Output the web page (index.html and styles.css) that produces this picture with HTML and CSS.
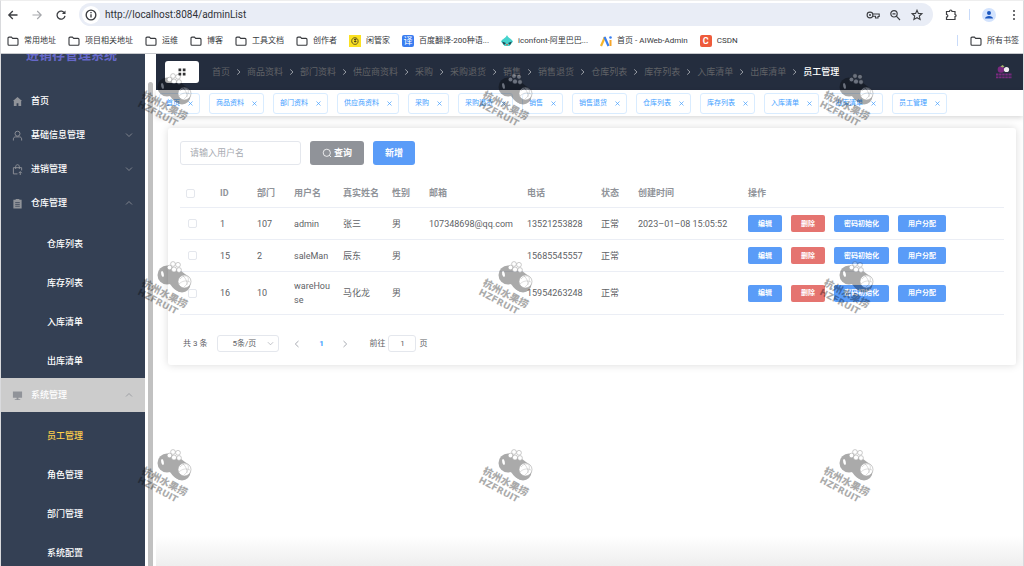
FILE: index.html
```
<!DOCTYPE html>
<html lang="zh-CN">
<head>
    <meta charset="UTF-8">
    <meta name="viewport" content="width=device-width, initial-scale=1.0">
    <title>员工管理</title>
    <link rel="stylesheet" href="styles.css">
</head>
<body>
    <svg class="defs" aria-hidden="true">
        <symbol id="folder" viewBox="0 0 12 12"><path d="M1 3.2c0-.7.4-1.1 1-1.1h2.4l1.3 1.3H10c.6 0 1 .4 1 1v4.9c0 .6-.4 1-1 1H2c-.6 0-1-.4-1-1z" fill="none" stroke="currentColor" stroke-width="1.1"/></symbol>
        <symbol id="right" viewBox="0 0 8 8"><path d="M2.5 1 5.7 4 2.5 7" fill="none" stroke="currentColor"/></symbol>
        <symbol id="left" viewBox="0 0 8 8"><path d="M5.5 1 2.3 4l3.2 3" fill="none" stroke="currentColor"/></symbol>
        <symbol id="down" viewBox="0 0 8 8"><path d="M1 2.5 4 5.5l3-3" fill="none" stroke="currentColor" stroke-width=".8"/></symbol>
        <symbol id="up" viewBox="0 0 8 8"><path d="M1 5.5 4 2.5l3 3" fill="none" stroke="currentColor" stroke-width=".8"/></symbol>
        <symbol id="close" viewBox="0 0 8 8"><path d="m1.7 1.7 4.6 4.6m0-4.6L1.7 6.3" fill="none" stroke="currentColor" stroke-width=".8"/></symbol>
        <symbol id="fruit" viewBox="-6 0 60 62">
            <circle cx="27" cy="15" r="9.500"/>
            <path d="M33 8c6 1 12 5 16 10l-8 14c-7-1-9-6-12-9z"/>
            <circle cx="42" cy="24" r="8.500"/>
            <g fill="#fff" stroke="#000" stroke-width=".6">
                <circle cx="33" cy="4" r="2.400"/><circle cx="38" cy="4.800" r="2.400"/><circle cx="29.500" cy="7.500" r="2.300"/><circle cx="34" cy="9.500" r="2.500"/><circle cx="39" cy="10" r="2.400"/>
                <circle cx="44.500" cy="21.500" r="6.500"/>
            </g>
            <path d="M40 19c2-3 6-4 8-2 1 3 0 7-4 10m-5-3c3-3 7-4 11-2m-7-6c3 2 4 6 4 9" fill="none" stroke="#000" stroke-width=".400"/>
            <ellipse cx="22.500" cy="14" rx="1.300" ry="3" fill="#fff" transform="rotate(-12 22.500 14)"/>
            <text x="1" y="25" transform="rotate(28 1 25)" class="mark-name">杭州水果捞</text>
            <text x="-3" y="34" transform="rotate(28 -3 34)" class="mark-latin">HZFRUIT</text>
        </symbol>
    </svg>

    <div class="window">
        <!-- browser toolbar -->
        <div class="toolbar">
            <button class="icon-btn" aria-label="后退"><svg viewBox="0 0 12 12"><path d="M10.500 6H2m3.800-4L1.800 6l4 4" fill="none" stroke="currentColor" stroke-width="1.3"/></svg></button>
            <button class="icon-btn muted" aria-label="前进"><svg viewBox="0 0 12 12"><path d="M1.500 6H10M6.200 2l4 4-4 4" fill="none" stroke="currentColor" stroke-width="1.1"/></svg></button>
            <button class="icon-btn" aria-label="刷新"><svg viewBox="0 0 12 12"><path d="M9.700 4.500A4 4 0 1 0 10 6.800" fill="none" stroke="currentColor" stroke-width="1.3"/><path d="M10.500 1.500v3.600H6.900z" fill="currentColor"/></svg></button>
            <div class="omnibox">
                <svg class="info" viewBox="0 0 16 16"><circle cx="8" cy="8" r="8" fill="#fff"/><circle cx="8" cy="8" r="4.300" fill="none" stroke="currentColor" stroke-width="1.200"/><path d="M8 7.300v3M8 5.300v1.200" stroke="currentColor" stroke-width="1.200"/></svg>
                <input class="url" type="text" aria-label="地址" value="http://localhost:8084/adminList">
                <svg class="omni-icon" viewBox="0 0 14 12"><g fill="none" stroke="currentColor" stroke-width="1.100"><circle cx="4" cy="6" r="2.900"/><path d="M6.700 5h6.500v2.500H12V9H9.500V7.300H6.700"/></g><circle cx="4" cy="6" r="1" fill="currentColor"/></svg>
                <svg class="omni-icon" viewBox="0 0 14 12"><g fill="none" stroke="currentColor" stroke-width="1.200"><circle cx="6" cy="4.800" r="3.200"/><path d="M8.300 7.200 12 11M4.500 4.800h3"/></g></svg>
                <svg class="omni-icon" viewBox="0 0 14 12"><path d="m7 1.200 1.400 3.200 3.500.3-2.600 2.300.8 3.500L7 8.700l-3.100 1.800.8-3.500L2.100 4.700l3.500-.3z" fill="none" stroke="currentColor" stroke-width="1.100"/></svg>
            </div>
            <button class="icon-btn" aria-label="扩展程序"><svg viewBox="0 0 12 12"><path d="M1.500 2.500h3c0-2 2.500-2 2.500 0h3v3c1.500 0 1.500 2 0 2v3H1.500V8.200c1.800 0 1.800-2.700 0-2.700z" fill="none" stroke="currentColor" stroke-width="1.200"/></svg></button>
            <span class="divider"></span>
            <button class="icon-btn avatar" aria-label="个人资料"><svg viewBox="0 0 14 14"><circle cx="7" cy="7" r="7" fill="#d3e3fd"/><circle cx="7" cy="5" r="2" fill="#1b57c0"/><path d="M3 10.500c0-3.500 8-3.500 8 0z" fill="#1b57c0"/></svg></button>
            <button class="icon-btn more" aria-label="更多"><svg viewBox="0 0 12 12" fill="currentColor"><circle cx="6" cy="2" r="1"/><circle cx="6" cy="6" r="1"/><circle cx="6" cy="10" r="1"/></svg></button>
        </div>

        <div class="bookmarks">
            <a href="#"><svg><use href="#folder"/></svg>常用地址</a>
            <a href="#"><svg><use href="#folder"/></svg>项目相关地址</a>
            <a href="#"><svg><use href="#folder"/></svg>运维</a>
            <a href="#"><svg><use href="#folder"/></svg>博客</a>
            <a href="#"><svg><use href="#folder"/></svg>工具文档</a>
            <a href="#"><svg><use href="#folder"/></svg>创作者</a>
            <a href="#"><svg viewBox="0 0 12 12"><path d="M0 0h12v12H0z" fill="#fbe122"/><path d="M3 4.500C4 2 8.500 2 9 5.500S6.500 10 4.500 9 2.500 6 3 4.500zM5 4.500h2.500M5 6.500h2.500M6.200 3.500v4" fill="none" stroke="#3a3520" stroke-width=".8"/></svg>闲管家</a>
            <a href="#"><span class="favicon blue">译</span>百度翻译-200种语...</a>
            <a href="#"><svg viewBox="0 0 12 12"><path d="M6 0c1 3 5 4 6 6.500L8.500 11h-5L0 6.500C1 4 5 3 6 0z" fill="#45d3cd"/><path d="M1 6.500 5 8 3 10zM11 6.500 7 8l2 2z" fill="#25424f"/><path d="m5 9 1 2 1-2z" fill="#e5533d"/></svg>iconfont-阿里巴巴...</a>
            <a href="#"><svg viewBox="0 0 12 12"><path d="M1 11 5 2" stroke="#f5b52b" stroke-width="2.200"/><path d="m4.500 2 4 9" stroke="#397ff2" stroke-width="2.200"/><path d="M10.500 5v6" stroke="#f5a52b" stroke-width="2"/><circle cx="10.500" cy="2.500" r="1.300" fill="#397ff2"/></svg>首页 - AIWeb-Admin</a>
            <a href="#"><span class="favicon red">C</span>CSDN</a>
            <span class="divider push"></span>
            <a class="all" href="#"><svg><use href="#folder"/></svg>所有书签</a>
        </div>

        <div class="app">
            <aside class="sidebar">
                <div class="brand">进销存管理系统</div>
                <nav class="menu">
                    <a class="menu-item" href="#"><svg viewBox="0 0 12 12"><path d="M6 1 1 5.500h1V11h3V8h2v3h3V5.500h1z" fill="currentColor"/></svg>首页</a>
                    <a class="menu-item" href="#"><svg viewBox="0 0 12 12"><g fill="none" stroke="currentColor"><circle cx="6" cy="4" r="2.700"/><path d="M1.500 11.500V9.800c0-1.500 1-2.300 2.500-2.300h4c1.500 0 2.500.8 2.500 2.300v1.700"/></g></svg>基础信息管理<svg class="arrow"><use href="#down"/></svg></a>
                    <a class="menu-item" href="#"><svg viewBox="0 0 12 12"><path d="M6 10.800H1.500V4h9v3M4 5.500V3c0-3 4-3 4 0v2.500M9 12V8.500M7.300 10 9 8.300l1.700 1.700" fill="none" stroke="currentColor"/></svg>进销管理<svg class="arrow"><use href="#down"/></svg></a>
                    <a class="menu-item" href="#"><svg viewBox="0 0 12 12"><path d="M1.500 2H4V1h4v1h2.500v9.500h-9z" fill="currentColor"/><path d="M3.500 5h5m-5 2h5m-5 2h5" stroke="#344054" stroke-width=".8"/></svg>仓库管理<svg class="arrow"><use href="#up"/></svg></a>
                    <div class="submenu">
                        <a href="#">仓库列表</a>
                        <a href="#">库存列表</a>
                        <a href="#">入库清单</a>
                        <a href="#">出库清单</a>
                    </div>
                    <a class="menu-item hover" href="#"><svg viewBox="0 0 12 12"><path d="M1 1.500h10v7H1zM5 8h2v2h2v1H3v-1h2z" fill="currentColor"/></svg>系统管理<svg class="arrow"><use href="#up"/></svg></a>
                    <div class="submenu">
                        <a class="active" href="#">员工管理</a>
                        <a href="#">角色管理</a>
                        <a href="#">部门管理</a>
                        <a href="#">系统配置</a>
                    </div>
                </nav>
            </aside>
            <div class="scrollbar"></div>

            <main class="main">
                <header class="header">
                    <button class="collapse" aria-label="折叠菜单"><svg viewBox="0 0 8 8"><path d="M.5.500h2.700v2.700H.5zM4.800.500h2.700v2.700H4.800zM.5 4.800h2.700v2.700H.5zM4.800 4.800h2.700v2.700H4.800z" fill="#303133"/></svg></button>
                    <nav class="breadcrumb">
                        <a href="#">首页</a><svg><use href="#right"/></svg>
                        <a href="#">商品资料</a><svg><use href="#right"/></svg>
                        <a href="#">部门资料</a><svg><use href="#right"/></svg>
                        <a href="#">供应商资料</a><svg><use href="#right"/></svg>
                        <a href="#">采购</a><svg><use href="#right"/></svg>
                        <a href="#">采购退货</a><svg><use href="#right"/></svg>
                        <a href="#">销售</a><svg><use href="#right"/></svg>
                        <a href="#">销售退货</a><svg><use href="#right"/></svg>
                        <a href="#">仓库列表</a><svg><use href="#right"/></svg>
                        <a href="#">库存列表</a><svg><use href="#right"/></svg>
                        <a href="#">入库清单</a><svg><use href="#right"/></svg>
                        <a href="#">出库清单</a><svg><use href="#right"/></svg>
                        <a class="current" href="#">员工管理</a>
                    </nav>
                    <svg class="user-logo" viewBox="0 0 18 14"><circle cx="6" cy="4.500" r="3.300" fill="#7b2a80"/><circle cx="11.500" cy="4.500" r="2.600" fill="#f2edf0"/><path d="M5.500 1.500 7.500 0l2 1.500-2 1z" fill="#a3b36b"/><path d="M1 9.500h16M1 12.300h16" stroke="#7b2a80" stroke-width="1.800" stroke-dasharray="2.500 .600"/></svg>
                </header>

                <div class="tabs">
                    <span class="tag">首页<button aria-label="关闭"><svg><use href="#close"/></svg></button></span>
                    <span class="tag">商品资料<button aria-label="关闭"><svg><use href="#close"/></svg></button></span>
                    <span class="tag">部门资料<button aria-label="关闭"><svg><use href="#close"/></svg></button></span>
                    <span class="tag">供应商资料<button aria-label="关闭"><svg><use href="#close"/></svg></button></span>
                    <span class="tag">采购<button aria-label="关闭"><svg><use href="#close"/></svg></button></span>
                    <span class="tag">采购退货<button aria-label="关闭"><svg><use href="#close"/></svg></button></span>
                    <span class="tag">销售<button aria-label="关闭"><svg><use href="#close"/></svg></button></span>
                    <span class="tag">销售退货<button aria-label="关闭"><svg><use href="#close"/></svg></button></span>
                    <span class="tag">仓库列表<button aria-label="关闭"><svg><use href="#close"/></svg></button></span>
                    <span class="tag">库存列表<button aria-label="关闭"><svg><use href="#close"/></svg></button></span>
                    <span class="tag">入库清单<button aria-label="关闭"><svg><use href="#close"/></svg></button></span>
                    <span class="tag">出库清单<button aria-label="关闭"><svg><use href="#close"/></svg></button></span>
                    <span class="tag">员工管理<button aria-label="关闭"><svg><use href="#close"/></svg></button></span>
                </div>

                <section class="card">
                    <form class="search">
                        <input class="field" type="text" aria-label="用户名" placeholder="请输入用户名">
                        <button class="btn info-btn" type="button"><svg viewBox="0 0 10 10"><circle cx="4.800" cy="4.800" r="3.600" fill="none" stroke="currentColor" stroke-width=".800"/><path d="m7.400 7.400 1.600 1.600" stroke="currentColor" stroke-width=".800"/></svg>查询</button>
                        <button class="btn" type="button">新增</button>
                    </form>

                    <table class="table">
                        <colgroup>
                            <col class="c-check"><col class="c-s"><col class="c-s"><col class="c-m"><col class="c-m"><col class="c-s">
                            <col class="c-mail"><col class="c-phone"><col class="c-s"><col class="c-time"><col>
                        </colgroup>
                        <thead>
                            <tr><th><input type="checkbox" aria-label="全选"></th><th>ID</th><th>部门</th><th>用户名</th><th>真实姓名</th><th>性别</th><th>邮箱</th><th>电话</th><th>状态</th><th>创建时间</th><th>操作</th></tr>
                        </thead>
                        <tbody>
                            <tr>
                                <td><input type="checkbox" aria-label="选择 admin"></td><td>1</td><td>107</td><td>admin</td><td>张三</td><td>男</td><td>107348698@qq.com</td><td>13521253828</td><td>正常</td><td>2023–01–08 15:05:52</td>
                                <td><div class="actions"><button class="mini">编辑</button><button class="mini danger">删除</button><button class="mini">密码初始化</button><button class="mini">用户分配</button></div></td>
                            </tr>
                            <tr>
                                <td><input type="checkbox" aria-label="选择 saleMan"></td><td>15</td><td>2</td><td>saleMan</td><td>辰东</td><td>男</td><td></td><td>15685545557</td><td>正常</td><td></td>
                                <td><div class="actions"><button class="mini">编辑</button><button class="mini danger">删除</button><button class="mini">密码初始化</button><button class="mini">用户分配</button></div></td>
                            </tr>
                            <tr>
                                <td><input type="checkbox" aria-label="选择 wareHouse"></td><td>16</td><td>10</td><td>wareHouse</td><td>马化龙</td><td>男</td><td></td><td>15954263248</td><td>正常</td><td></td>
                                <td><div class="actions"><button class="mini">编辑</button><button class="mini danger">删除</button><button class="mini">密码初始化</button><button class="mini">用户分配</button></div></td>
                            </tr>
                        </tbody>
                    </table>

                    <div class="pagination">
                        <span>共 3 条</span>
                        <span class="size">
                            <select aria-label="每页条数"><option>5条/页</option></select>
                            <svg><use href="#down"/></svg>
                        </span>
                        <button class="page" aria-label="上一页"><svg><use href="#left"/></svg></button>
                        <button class="page current">1</button>
                        <button class="page" aria-label="下一页"><svg><use href="#right"/></svg></button>
                        <label class="jump">前往<input type="text" value="1">页</label>
                    </div>
                </section>
            </main>
        </div>

        <div class="watermarks" aria-hidden="true">
            <svg><use href="#fruit"/></svg><svg><use href="#fruit"/></svg><svg><use href="#fruit"/></svg>
            <svg><use href="#fruit"/></svg><svg><use href="#fruit"/></svg><svg><use href="#fruit"/></svg>
            <svg><use href="#fruit"/></svg><svg><use href="#fruit"/></svg><svg><use href="#fruit"/></svg>
        </div>
    </div>
</body>
</html>
```
FILE: styles.css
```
* {
    box-sizing: border-box;
}
body {
    margin: 0;
    font-family: Roboto, "Noto Sans CJK SC", sans-serif;
    font-size: 9px;
    line-height: 14px;
    color: #606266;
    background: #fff;
}
a {
    color: inherit;
    text-decoration: none;
}
button, input, select {
    font: inherit;
    color: inherit;
    margin: 0;
    padding: 0;
}
button {
    border: none;
    background: none;
    cursor: pointer;
}
svg {
    display: block;
    flex: none;
}
.defs {
    position: absolute;
    width: 0;
    height: 0;
}
.window {
    position: relative;
    height: 100vh;
    display: flex;
    flex-direction: column;
    overflow: hidden;
    border: 1px solid #d9dadd;
    border-top-color: #eee;
    border-bottom: none;
}

/* browser */
.toolbar {
    display: flex;
    align-items: center;
    gap: 12px;
    height: 27px;
    padding: 0 3px 0 6px;
    color: #3c3e42;
}
.icon-btn svg {
    width: 12px;
    height: 12px;
}
.icon-btn.muted {
    color: #a5a7ab;
}
.icon-btn.avatar svg {
    width: 14px;
    height: 14px;
}
.omnibox {
    flex: 1;
    display: flex;
    align-items: center;
    gap: 8px;
    height: 23px;
    padding: 0 9px 0 3px;
    border-radius: 12px;
    background: #e9edf6;
}
.info {
    width: 18px;
    height: 18px;
}
.url {
    flex: 1;
    margin-left: -3px;
    border: none;
    outline: none;
    background: none;
    font-size: 10px;
    color: #303236;
}
.omni-icon {
    width: 14px;
    height: 12px;
}
.divider {
    width: 1px;
    height: 11px;
    background: #c9dbf9;
}
.bookmarks {
    display: flex;
    align-items: center;
    gap: 12px;
    height: 26px;
    padding: 0 4px 0 6px;
    border-bottom: 1px solid #c7c9cd;
    font-size: 8px;
    color: #36383c;
    white-space: nowrap;
}
.bookmarks a {
    display: flex;
    align-items: center;
    gap: 5px;
}
.bookmarks svg {
    width: 12px;
    height: 12px;
}
.bookmarks .push {
    margin-left: auto;
}
.favicon {
    width: 12px;
    height: 12px;
    border-radius: 2px;
    color: #fff;
    font-size: 9px;
    line-height: 12px;
    text-align: center;
}
.favicon.blue {
    background: #3a7df0;
}
.favicon.red {
    background: #ee5b3b;
    font-weight: bold;
}

/* sidebar */
.app {
    flex: 1;
    display: flex;
    min-height: 0;
}
.sidebar {
    width: 144px;
    overflow: hidden;
    background: #344054;
    color: #fff;
    font-weight: 500;
}
.brand {
    height: 44px;
    margin-top: -14px;
    padding-right: 3px;
    font-size: 13px;
    line-height: 30px;
    text-align: center;
    font-weight: bold;
    color: #6668c9;
}
.menu-item {
    display: flex;
    align-items: center;
    gap: 8px;
    height: 34px;
    padding: 0 12px 0 11px;
}
.menu-item svg {
    width: 11px;
    height: 11px;
    color: #909399;
}
.menu-item .arrow {
    width: 8px;
    height: 8px;
    margin-left: auto;
}
.menu-item.hover {
    background: #ccc;
}
.submenu {
    padding-top: 2px;
}
.submenu a {
    display: block;
    height: 33px;
    margin-top: 6px;
    padding-left: 46px;
    line-height: 33px;
}
.submenu .active {
    color: #ffd04b;
}
.scrollbar {
    width: 5px;
    margin: 28px 3px 0;
    border-radius: 3px 3px 0 0;
    background: #c1c1c1;
}

/* header */
.main {
    flex: 1;
    min-width: 0;
    background: linear-gradient(#fff 94%, #eee);
}
.header {
    display: flex;
    align-items: center;
    height: 36px;
    padding: 0 10px 0 9px;
    background: #242d3e;
}
.collapse {
    display: flex;
    align-items: center;
    justify-content: center;
    width: 34px;
    height: 22px;
    border-radius: 3px;
    background: #fff;
}
.collapse svg {
    width: 8px;
    height: 8px;
}
.breadcrumb {
    flex: 1;
    display: flex;
    align-items: center;
    gap: 5px;
    margin-left: 13px;
    color: #606266;
    white-space: nowrap;
}
.breadcrumb svg {
    width: 7px;
    height: 8px;
    color: #a8abb2;
}
.breadcrumb .current {
    color: #fff;
    font-weight: 500;
}
.user-logo {
    width: 18px;
    height: 14px;
}
.tabs {
    display: flex;
    align-items: center;
    gap: 9px;
    height: 26px;
    padding-left: 3px;
    background: #fff;
    box-shadow: 0 2px 5px rgba(0, 0, 0, 0.15);
    font-size: 7px;
    color: #409eff;
    white-space: nowrap;
}
.tag {
    display: flex;
    align-items: center;
    gap: 7px;
    height: 21px;
    padding: 0 5px 0 6px;
    border: 1px solid #d9ecff;
    border-radius: 3px;
}
.tag svg {
    width: 7px;
    height: 7px;
}

/* content */
.card {
    margin: 12px 7px 0 12px;
    padding: 13px 12px;
    border-radius: 3px;
    background: #fff;
    box-shadow: 0 0 8px rgba(0, 0, 0, 0.15);
}
.search {
    display: flex;
    gap: 9px;
}
.field {
    width: 121px;
    height: 24px;
    padding: 0 9px;
    border: 1px solid #e4e7ed;
    border-radius: 3px;
}
.field::placeholder {
    color: #a8abb2;
}
.btn {
    display: flex;
    align-items: center;
    gap: 2px;
    height: 24px;
    padding: 0 12px;
    border-radius: 3px;
    background: #5a9cf8;
    color: #fff;
    font-weight: bold;
}
.btn svg {
    width: 10px;
    height: 10px;
}
.info-btn {
    background: #909399;
}
.table {
    width: 100%;
    margin-top: 12px;
    table-layout: fixed;
    border-collapse: collapse;
}
.c-check {
    width: 33px;
}
.c-s {
    width: 37px;
}
.c-m {
    width: 49px;
}
.c-mail {
    width: 98px;
}
.c-phone {
    width: 74px;
}
.c-time {
    width: 110px;
}
.table th, .table td {
    padding: 7px 5px 7px 7px;
    border-bottom: 1px solid #ebeef5;
    text-align: left;
    word-break: break-all;
}
.table th {
    padding-top: 9px;
    font-weight: bold;
    color: #909399;
}
.table input {
    display: block;
    width: 9px;
    height: 9px;
    appearance: none;
    border: 1px solid #e4e7ed;
    border-radius: 2px;
    background: #fff;
}
.table th input {
    margin-left: -1px;
}
.table td input {
    margin-left: 1px;
}
.actions {
    display: flex;
    gap: 9px;
}
.mini {
    height: 17px;
    padding: 0 10px;
    border-radius: 2px;
    background: #5a9cf8;
    color: #fff;
    font-size: 7px;
    font-weight: bold;
    white-space: nowrap;
}
.mini.danger {
    background: #e57470;
}
.pagination {
    display: flex;
    align-items: center;
    height: 17px;
    margin-top: 20px;
    padding-left: 3px;
    font-size: 8px;
}
.size {
    position: relative;
    margin: 0 6px 0 10px;
}
.size select {
    display: block;
    width: 62px;
    height: 17px;
    padding-left: 14px;
    appearance: none;
    border: 1px solid #e4e7ed;
    border-radius: 3px;
    background: #fff;
}
.size svg {
    position: absolute;
    top: 5px;
    right: 5px;
    width: 7px;
    height: 7px;
    color: #a8abb2;
}
.page {
    display: flex;
    justify-content: center;
    width: 24px;
    color: #a8abb2;
}
.page svg {
    width: 8px;
    height: 8px;
}
.page.current {
    color: #409eff;
    font-weight: bold;
}
.jump {
    display: flex;
    align-items: center;
    gap: 3px;
    margin-left: 12px;
}
.jump input {
    width: 28px;
    height: 17px;
    border: 1px solid #e4e7ed;
    border-radius: 3px;
    text-align: center;
}

/* watermark layer over the whole window */
.watermarks {
    position: absolute;
    top: 71px;
    left: 133px;
    display: grid;
    grid-template-columns: repeat(3, 341px);
    grid-auto-rows: 188px;
    opacity: 0.33;
    pointer-events: none;
}
.watermarks svg {
    width: 60px;
    height: 62px;
}
.mark-name {
    font-size: 10px;
    font-weight: 900;
}
.mark-latin {
    font-family: "DejaVu Sans", sans-serif;
    font-size: 9px;
    font-weight: bold;
}
```
